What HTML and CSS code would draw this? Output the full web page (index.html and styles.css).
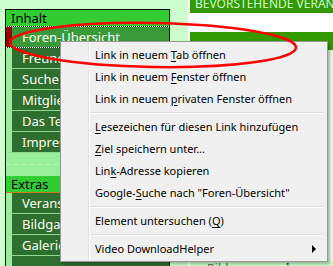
FILE: index.html
```html
<!DOCTYPE html>
<html lang="de">
<head>
  <meta charset="UTF-8" />
  <title>Forum</title>
  <link rel="stylesheet" href="styles.css">
</head>
<body>
  <div class="page">
    <div class="edge"></div>
    <div class="layout">
      <nav class="sidebar">
        <div class="box-head">Inhalt</div>
        <ul class="nav">
          <li class="active"><span>Foren-Übersicht</span></li>
          <li><span>Freunde</span></li>
          <li><span>Suche</span></li>
          <li><span>Mitglieder</span></li>
          <li><span>Das Team</span></li>
          <li><span>Impressum</span></li>
        </ul>
        <div class="nav-gap"></div>
        <div class="box-head extras">Extras</div>
        <ul class="nav">
          <li><span>Veranstaltungen</span></li>
          <li><span>Bildgalerie</span></li>
          <li><span>Galerien</span></li>
          <li><span>&nbsp;</span></li>
        </ul>
      </nav>

      <main class="content">
        <div class="panel-head">Bevorstehende Veranstaltungen</div>
        <div class="panel-gap"></div>
        <div class="panel-head second"></div>
        <div class="panel-body"></div>
        <div class="caption"><span class="label">Bildname:</span> <b>meine neue Kamera</b></div>
      </main>
    </div>
  </div>

  <div class="menu">
    <div class="item">Link in neuem <u>T</u>ab öffnen</div>
    <div class="item">Link in neuem <u>F</u>enster öffnen</div>
    <div class="item">Link in neuem <u>p</u>rivaten Fenster öffnen</div>
    <div class="sep"></div>
    <div class="item"><u>L</u>esezeichen für diesen Link hinzufügen</div>
    <div class="item"><u>Z</u>iel speichern unter...</div>
    <div class="item">Lin<u>k</u>-Adresse kopieren</div>
    <div class="item">Google-<u>S</u>uche nach "Foren-Übersicht"</div>
    <div class="sep"></div>
    <div class="item">Element untersuchen (<u>Q</u>)</div>
    <div class="sep"></div>
    <div class="item"><i class="arrow"></i>Video DownloadHelper</div>
  </div>

  <svg class="circle" width="333" height="266" viewBox="0 0 333 266">
    <ellipse cx="153" cy="45" rx="143" ry="22" transform="rotate(1 153 45)" fill="none" stroke="#ff0000" stroke-width="2.5" />
  </svg>
</body>
</html>
```

FILE: styles.css
```css
body { margin: 0; font-family: "Noto Sans", "DejaVu Sans", sans-serif; font-size: 12px; overflow: hidden; background: #ccffcc; }
.page { display: flex; height: 266px; overflow: hidden; }
.edge { width: 5px; background: #339900; }
.layout { flex: 1; display: flex; align-items: flex-start; background: #ccffcc; }

.sidebar { width: 163px; margin: 9px 0 0 5px; border: 1px solid #000; border-bottom: none; background: #99ee99; }
.box-head { height: 16px; line-height: 16px; padding-left: 5px; background: #33cc33; color: #000; font-size: 13px; }
.box-head.extras { border-bottom: 1px solid #cc7a1a; }
.nav { list-style: none; margin: 0; padding: 0; }
.nav li { display: flex; height: 20px; border-bottom: 1px solid #8fd88f; border-left: 6px solid #99ee99; }
.nav li span { flex: 1; background: #2e6e2e; color: #fffff0; padding-left: 10px; line-height: 20px; font-size: 13px; white-space: nowrap; overflow: hidden; }
.nav li.active { border-left: none; border-top: 1px dotted #fff; border-bottom: 1px dotted #fff; padding-left: 6px; background: #990000; }
.nav li.active span { background: #3a9a3a; }
.nav-gap { height: 23px; background: #99ee99 linear-gradient(to right, #c4f5c4 50%, transparent 50%) 0 11px / 8px 1px repeat-x; }

.content { flex: 1; margin: -6px 0 0 18px; background: #fff; padding-left: 2px; }
.panel-head { height: 19px; line-height: 19px; padding-left: 5px; background: #339900; color: #ccffcc; font-size: 12px; text-transform: uppercase; white-space: nowrap; overflow: hidden; }
.panel-head.second { height: 18px; }
.panel-gap { height: 19px; }
.panel-body { height: 211px; background: #eaffea; }
.caption { background: #ccffcc; padding-left: 17px; line-height: 16px; color: #557755; white-space: nowrap; }
.caption b { color: #003366; }

.menu { position: absolute; left: 60px; top: 41px; width: 262px; padding: 2px 2px 1px 2px; border: 1px solid #979797; background: #f0f0f0 linear-gradient(to right, transparent 27px, #e2e3e3 27px, #e2e3e3 28px, #fff 28px, #fff 29px, transparent 29px); box-shadow: 2px 2px 3px rgba(0, 0, 0, 0.3); color: #000; font-size: 11px; }
.item { height: 22px; line-height: 22px; padding-left: 32px; padding-right: 9px; white-space: nowrap; }
.item u { text-decoration: underline; text-underline-offset: 2px; }
.sep { height: 6px; margin: 0 1px 0 27px; background: linear-gradient(#f0f0f0 2px, #e0e0e0 2px, #e0e0e0 3px, #fff 3px, #fff 4px, #f0f0f0 4px); }
.arrow { float: right; margin-top: 7px; width: 0; height: 0; border-left: 4px solid #000; border-top: 4px solid transparent; border-bottom: 4px solid transparent; }

.circle { position: absolute; left: 0; top: 0; pointer-events: none; }
```
